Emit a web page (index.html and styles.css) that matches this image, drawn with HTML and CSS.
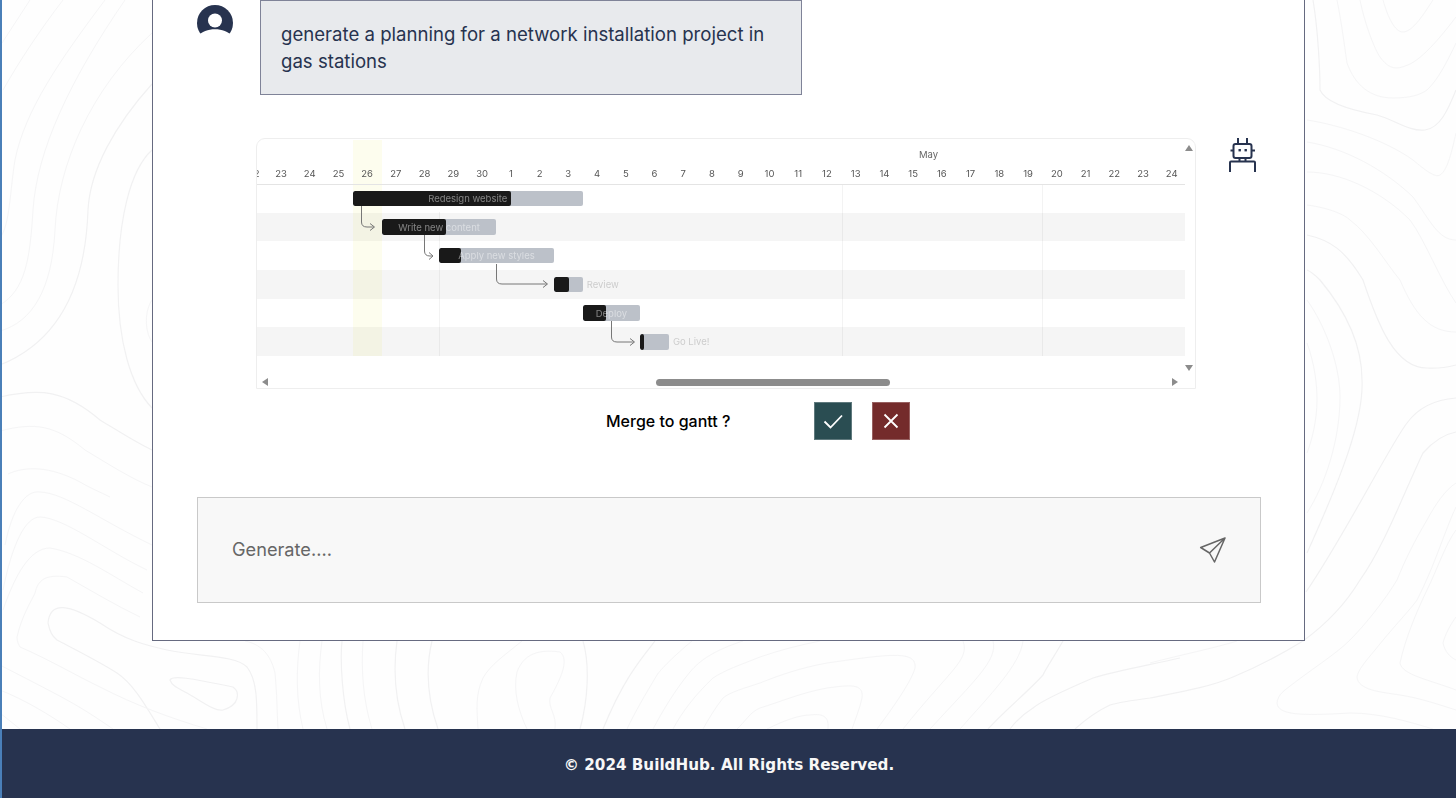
FILE: index.html
```html
<!DOCTYPE html>
<html lang="en">
<head>
<meta charset="utf-8">
<title>BuildHub</title>
<link rel="stylesheet" href="styles.css">
</head>
<body>
<svg class="contours" viewBox="0 0 1456 729" width="1456" height="729" aria-hidden="true">
  <g class="c-strong">
    <path d="M0 365C50 345 85 300 88 210C90 170 115 125 152 84"/>
    <path d="M152 150C130 170 118 220 118 285C118 340 130 385 152 408"/>
    <path d="M0 397C40 388 65 390 100 420C120 432 135 442 152 450"/>
    <path d="M48 623C50 600 70 605 100 623C125 640 145 645 167 650C200 657 235 655 247 667C257 680 257 700 257 729M48 623C50 632 52 636 57 640C80 652 100 662 117 673C135 685 148 710 160 729"/>
    <path d="M170 680C172 675 190 678 233 687C240 692 240 705 223 710C215 712 200 700 187 693C178 688 172 686 170 680Z"/>
    <path d="M1307 270C1312 272 1316 276 1320 280C1345 310 1362 345 1362 380C1364 420 1340 480 1307 553"/>
    <path d="M1307 235C1330 240 1345 250 1363 280C1378 325 1395 368 1427 368C1440 369 1448 367 1456 365"/>
    <path d="M1456 398C1430 400 1415 412 1407 423C1390 445 1345 535 1306 592"/>
    <path d="M1313 0C1318 30 1320 70 1320 90C1325 102 1350 110 1377 115C1395 120 1410 132 1425 130C1440 128 1448 110 1456 90"/>
    <path d="M1180 658C1150 665 1120 670 1093 678C1065 690 1040 702 1033 708C1022 715 1015 722 1010 729"/>
    <path d="M1063 641C1055 655 1045 670 1043 675C1030 690 1005 710 988 729"/>
    <path d="M1456 432C1440 435 1430 445 1423 453C1405 490 1385 545 1360 580C1345 605 1325 625 1303 641C1280 655 1255 668 1233 677C1210 687 1180 692 1150 698C1135 700 1120 702 1110 705C1095 712 1085 720 1075 729"/>
    <path d="M342 641C340 660 342 700 350 729M397 641C393 670 395 700 405 729M432 641C425 670 428 700 438 729"/>
    <path d="M655 641C640 660 623 680 603 729M583 641C590 665 588 700 580 729"/>
  </g>
  <g class="c-weak">
    <path d="M0 238C10 225 10 190 15 160C25 110 60 60 105 0"/>
    <path d="M0 305C25 290 30 260 33 210C37 150 70 80 125 0"/>
    <path d="M0 331C32 322 52 290 55 230C58 165 90 90 152 33"/>
    <path d="M2 43L30 0M3 90C20 60 40 30 63 0"/>
    <path d="M152 300C145 310 144 330 152 342"/>
    <path d="M0 431C35 422 55 425 85 450C110 465 130 478 152 487"/>
    <path d="M8 474C25 466 50 466 80 482C90 488 100 492 110 497"/>
    <path d="M5 545C12 510 25 490 40 492C65 493 100 520 152 545"/>
    <path d="M3 590C12 545 25 517 40 517C65 518 105 550 147 570"/>
    <path d="M3 610C15 575 30 548 50 548C80 553 110 575 143 593"/>
    <path d="M17 637C22 615 32 600 35 593C38 580 45 574 67 577C90 590 115 605 140 617M17 637C17 642 19 645 20 647C50 660 75 675 100 687C135 705 170 718 207 729"/>
    <path d="M245 641C265 645 272 660 275 673C277 695 277 710 278 729"/>
    <path d="M300 641C296 670 296 700 303 729M322 641C318 670 318 700 327 729"/>
    <path d="M0 665C25 678 45 688 67 700C85 710 100 720 113 729M0 690C25 700 50 715 70 729M0 713L20 729"/>
    <path d="M363 641C361 670 363 700 372 729"/>
    <path d="M522 641C505 655 490 665 483 678C475 695 477 710 478 729"/>
    <path d="M527 729C518 710 513 690 517 672C525 650 545 650 560 652C570 660 560 680 550 698C548 708 557 715 555 729"/>
    <path d="M692 641C675 655 660 670 657 675C645 695 635 712 627 729M743 641C715 650 700 660 690 672C675 690 662 712 653 729"/>
    <path d="M820 641C800 645 780 650 760 657C740 665 725 670 713 678C695 695 682 712 673 729"/>
    <path d="M915 668C917 650 890 654 827 663C800 668 780 675 760 683C745 688 730 692 723 698C715 708 708 720 703 729M915 668C912 680 895 705 877 729"/>
    <path d="M862 698C864 683 850 685 827 688C800 693 780 702 760 708C750 712 745 722 737 729M862 698C860 708 855 720 852 729"/>
    <path d="M767 729C785 720 800 715 810 715C825 713 829 718 828 729"/>
    <path d="M963 641C970 660 950 670 903 729M993 641C998 660 975 680 930 729M1023 641C1020 665 990 695 960 729"/>
    <path d="M1150 663C1180 655 1215 648 1237 641"/>
    <path d="M1456 483C1445 490 1435 505 1427 520C1415 540 1405 560 1397 580C1385 600 1365 625 1350 640C1335 655 1310 670 1285 690C1283 692 1278 695 1277 703C1278 715 1300 716 1350 713C1380 713 1410 722 1433 729"/>
    <path d="M1357 677C1358 670 1365 662 1375 650C1395 625 1410 610 1417 600C1435 565 1445 530 1456 507M1357 677C1358 690 1380 692 1400 695C1420 698 1440 705 1456 710"/>
    <path d="M1400 663C1405 640 1415 615 1427 590C1437 570 1445 545 1456 530M1400 663C1402 675 1430 680 1456 690"/>
    <path d="M1443 643C1445 635 1450 625 1456 617M1443 643C1445 652 1450 657 1456 660"/>
    <path d="M1307 343C1315 365 1317 385 1317 400C1317 420 1312 440 1307 453"/>
    <path d="M1307 300C1325 325 1340 365 1340 397C1340 440 1325 485 1307 513"/>
    <path d="M1307 205C1330 208 1345 215 1350 220C1370 235 1385 262 1400 280C1415 315 1430 332 1456 332"/>
    <path d="M1307 172C1340 172 1380 190 1410 220C1425 240 1440 280 1456 303"/>
    <path d="M1307 142C1345 148 1385 170 1413 197C1430 220 1438 240 1456 240"/>
    <path d="M1307 120C1340 125 1385 140 1413 160C1425 170 1435 178 1440 175C1448 170 1452 150 1456 133"/>
    <path d="M1337 0C1342 25 1345 50 1347 63C1355 85 1370 98 1393 98C1410 98 1420 95 1427 90C1438 80 1448 60 1456 43"/>
    <path d="M1360 0C1365 25 1375 50 1380 57C1388 68 1395 70 1405 66C1420 62 1440 38 1456 17M1383 0C1388 18 1395 32 1403 32C1413 32 1425 12 1433 0"/>
  </g>
</svg>

<div class="app">
  <main class="main">
    <section class="card">
      <div class="msg-user">
        <svg class="avatar" viewBox="0 0 36 36" aria-hidden="true">
          <circle class="avatar-bg" cx="18" cy="18" r="18"/>
          <circle class="avatar-fg" cx="18" cy="15.5" r="7"/>
          <path class="avatar-fg" d="M0 36V31.5C5 26.5 11 24.2 18 24.2C25 24.2 31 26.5 36 31.5V36Z"/>
        </svg>
        <div class="bubble">generate a planning for a network installation project in gas stations</div>
      </div>

      <div class="msg-bot">
        <div class="gantt">
          <div class="today"></div>
          <svg class="grid-lines" viewBox="0 0 940 251" width="940" height="251" aria-hidden="true">
            <path d="M182.5 73V217M585.5 46V217M785.5 46V217"/>
          </svg>
          <div class="month">May</div>
          <div class="days">
            <span class="clip">22</span><span>23</span><span>24</span><span>25</span><span>26</span><span>27</span><span>28</span><span>29</span><span>30</span><span>1</span><span>2</span><span>3</span><span>4</span><span>5</span><span>6</span><span>7</span><span>8</span><span>9</span><span>10</span><span>11</span><span>12</span><span>13</span><span>14</span><span>15</span><span>16</span><span>17</span><span>18</span><span>19</span><span>20</span><span>21</span><span>22</span><span>23</span><span>24</span>
          </div>
          <div class="rows">
            <div class="row">
              <div class="bar b1"><div class="done d1"></div><span class="bar-label">Redesign website</span></div>
            </div>
            <div class="row band">
              <div class="bar b2"><div class="done d2"></div><span class="bar-label">Write new content</span></div>
            </div>
            <div class="row">
              <div class="bar b3"><div class="done d3"></div><span class="bar-label">Apply new styles</span></div>
            </div>
            <div class="row band">
              <div class="bar b4"><div class="done d4"></div></div>
              <span class="out-label l4">Review</span>
            </div>
            <div class="row">
              <div class="bar b5"><div class="done d5"></div><span class="bar-label">Deploy</span></div>
            </div>
            <div class="row band">
              <div class="bar b6"><div class="done d6"></div></div>
              <span class="out-label l6">Go Live!</span>
            </div>
          </div>
          <svg class="links" viewBox="0 0 940 251" width="940" height="251" aria-hidden="true">
            <path d="M104.5 67V83Q104.5 88 110 88H117M113 84.500L117.500 88L113 91.500"/>
            <path d="M167.500 96V112Q167.500 117 173 117H175.500M172 113.500L176 117L172 120.500"/>
            <path d="M239.500 125V140Q239.500 145 245 145H290M286 141.500L290.500 145L286 148.500"/>
            <path d="M354.500 182V198Q354.500 203 360 203H377M373 199.500L377.500 203L373 206.500"/>
          </svg>
          <span class="arrow up"></span>
          <span class="arrow down"></span>
          <div class="hscroll">
            <span class="arrow left"></span>
            <div class="thumb"></div>
            <span class="arrow right"></span>
          </div>
        </div>
        <svg class="robot" viewBox="0 0 30 34" aria-hidden="true">
          <path class="robot-line" d="M10 0V6M19 0V6M2.500 12.500H5.500M23.500 12.500H27M11.500 20.500V23.500M17.500 20.500V23.500M2 34V24.500Q2 23.500 3 23.500H26Q27 23.500 27 24.500V34"/>
          <rect class="robot-line" x="5.500" y="6" width="18" height="14" rx="2"/>
          <rect class="robot-eye" x="10.500" y="11" width="2.400" height="2.400"/>
          <rect class="robot-eye" x="16.500" y="11" width="2.400" height="2.400"/>
        </svg>
      </div>

      <div class="merge">
        <span class="merge-text">Merge to gantt ?</span>
        <button class="btn btn-yes" type="button" aria-label="Accept">
          <svg viewBox="0 0 24 24" width="24" height="24"><path d="M3.500 12.500L9.500 18.500L21 6.500"/></svg>
        </button>
        <button class="btn btn-no" type="button" aria-label="Reject">
          <svg viewBox="0 0 24 24" width="24" height="24"><path d="M5.500 5.500L18.500 18.500M18.500 5.500L5.500 18.500"/></svg>
        </button>
      </div>

      <div class="prompt">
        <span class="prompt-text">Generate....</span>
        <svg class="send" viewBox="0 0 28 26" width="28" height="26" aria-hidden="true">
          <path d="M26 1L1.700 10.500L10.500 16L15.500 25Z M26 1L10.500 16"/>
        </svg>
      </div>
    </section>
  </main>
  <footer class="footer">© 2024 BuildHub. All Rights Reserved.</footer>
</div>
</body>
</html>
```

FILE: styles.css
```css
* { box-sizing: border-box; }

html, body {
  margin: 0;
  height: 100%;
}

body {
  position: relative;
  height: 798px;
  overflow: hidden;
  background: #fefefe;
  font-family: Inter, "Noto Sans", sans-serif;
}

.contours {
  position: absolute;
  top: 0;
  left: 0;
  fill: none;
}

.c-strong { stroke: #f1f1f2; stroke-width: 1.2; }
.c-weak { stroke: #f5f5f6; stroke-width: 1; }

.app {
  position: relative;
  height: 798px;
  display: flex;
  flex-direction: column;
  border-left: 2px solid #4a7fb8;
}

.main {
  height: 729px;
  padding-left: 150px;
}

.card {
  width: 1153px;
  height: 641px;
  padding: 0 43px 0 44px;
  background: #fff;
  border: 1px solid #666a80;
  border-top: 0;
}

.msg-user {
  display: flex;
  align-items: flex-start;
  gap: 27px;
  height: 95px;
}

.avatar {
  width: 36px;
  height: 36px;
  margin-top: 5px;
  flex: none;
}

.avatar-bg { fill: #27334f; }
.avatar-fg { fill: #fff; }

.bubble {
  width: 542px;
  height: 95px;
  padding: 20px 20px;
  background: #e8eaed;
  border: 1px solid #7f8398;
  color: #27334f;
  font-size: 18.6px;
  line-height: 26.500px;
}

.msg-bot {
  display: flex;
  align-items: flex-start;
  gap: 32px;
  margin: 43px 0 0 59px;
}

.gantt {
  position: relative;
  flex: none;
  width: 940px;
  height: 251px;
  background: #fff;
  border: 1px solid #eeeeee;
  border-radius: 9px 9px 0 0;
  overflow: hidden;
  filter: blur(0.35px);
  color: #555;
  font-size: 9.500px;
}

.today {
  position: absolute;
  top: 1px;
  left: 96px;
  width: 29px;
  height: 216px;
  background: #fdfdee;
}

.grid-lines {
  position: absolute;
  top: 0;
  left: 0;
  fill: none;
  stroke: #f3f3f3;
}

.month {
  position: relative;
  height: 30px;
  padding: 11px 0 0 662px;
  color: #666;
  line-height: 10px;
}

.days,
.row {
  display: grid;
  grid-template-columns: 9.600px repeat(32, 28.740px);
  width: 928px;
}

.days {
  position: relative;
  height: 16px;
  border-bottom: 1px solid #e4e4e4;
  line-height: 10px;
  text-align: center;
}

.clip {
  overflow: hidden;
  text-align: left;
  text-indent: -9px;
  white-space: nowrap;
}

.rows {
  position: relative;
  width: 928px;
  margin-top: -1px;
}

.row {
  height: 28.700px;
  align-items: center;
}

.band { background: rgba(0, 0, 0, 0.038); }

.bar {
  position: relative;
  height: 15.500px;
  background: #bcc1c9;
  border-radius: 2px;
  overflow: hidden;
  display: flex;
  align-items: center;
  justify-content: center;
}

.b1 { grid-column: 5 / 13; }
.b2 { grid-column: 6 / 10; }
.b3 { grid-column: 8 / 12; }
.b4 { grid-column: 12 / 13; }
.b5 { grid-column: 13 / 15; }
.b6 { grid-column: 15 / 16; }

.done {
  position: absolute;
  top: 0;
  bottom: 0;
  left: 0;
  background: #191919;
  border-radius: 2px;
}

.d1 { width: 69%; }
.d2 { width: 56%; }
.d3 { width: 19%; }
.d4 { width: 52%; }
.d5 { width: 40%; }
.d6 { width: 14%; }

.bar-label {
  position: relative;
  color: rgba(255, 255, 255, 0.45);
  white-space: nowrap;
}

.out-label {
  color: #cdcdcd;
  white-space: nowrap;
  margin-left: 4px;
}

.l4 { grid-column: 13 / 15; }
.l6 { grid-column: 16 / 18; }

.links {
  position: absolute;
  top: 0;
  left: 0;
  fill: none;
  stroke: #777;
  stroke-width: 1;
}

.arrow {
  width: 0;
  height: 0;
  border-style: solid;
  border-color: transparent;
}

.up,
.down {
  position: absolute;
  left: 928px;
  border-width: 0 4px 6px;
  border-bottom-color: #8c8c8c;
}

.up { top: 6px; }

.down {
  top: 226px;
  border-width: 6px 4px 0;
  border-top-color: #8c8c8c;
}

.left,
.right {
  flex: none;
  border-width: 4px 6px 4px 0;
  border-right-color: #8c8c8c;
}

.right {
  border-width: 4px 0 4px 6px;
  border-left-color: #8c8c8c;
  margin-left: 282px;
}

.hscroll {
  display: flex;
  align-items: center;
  height: 10px;
  margin-top: 21px;
  padding-left: 5px;
}

.thumb {
  width: 234px;
  height: 7px;
  margin-left: 388px;
  background: #8c8c8c;
  border-radius: 4px;
}

.robot {
  width: 30px;
  height: 34px;
  flex: none;
}

.robot-line {
  fill: none;
  stroke: #27334f;
  stroke-width: 2;
}

.robot-eye { fill: #27334f; }

.merge {
  display: flex;
  align-items: center;
  height: 38px;
  margin: 13px 0 0 409px;
}

.merge-text {
  width: 208px;
  color: #000;
  font-size: 16px;
  font-weight: 500;
}

.btn {
  display: flex;
  align-items: center;
  justify-content: center;
  width: 38px;
  height: 38px;
  padding: 0;
  border: 1px solid rgba(255, 255, 255, 0.25);
}

.btn svg {
  fill: none;
  stroke: #fff;
  stroke-width: 1.800;
}

.btn-yes { background: #2a4d52; }

.btn-no {
  margin-left: 20px;
  background: #742b2b;
}

.prompt {
  display: flex;
  align-items: center;
  justify-content: space-between;
  height: 106px;
  margin-top: 57px;
  padding: 0 33px 0 34px;
  background: #f8f8f8;
  border: 1px solid #c9c9c9;
}

.prompt-text {
  margin-bottom: 2px;
  color: #666;
  font-size: 18.200px;
}

.send {
  fill: none;
  stroke: #666;
  stroke-width: 1.500;
  stroke-linejoin: round;
}

.footer {
  display: flex;
  align-items: center;
  justify-content: center;
  height: 69px;
  padding-top: 2px;
  background: #27334f;
  color: #f7f7f7;
  font-family: "DejaVu Sans", sans-serif;
  font-size: 15.200px;
  font-weight: 700;
}
```
